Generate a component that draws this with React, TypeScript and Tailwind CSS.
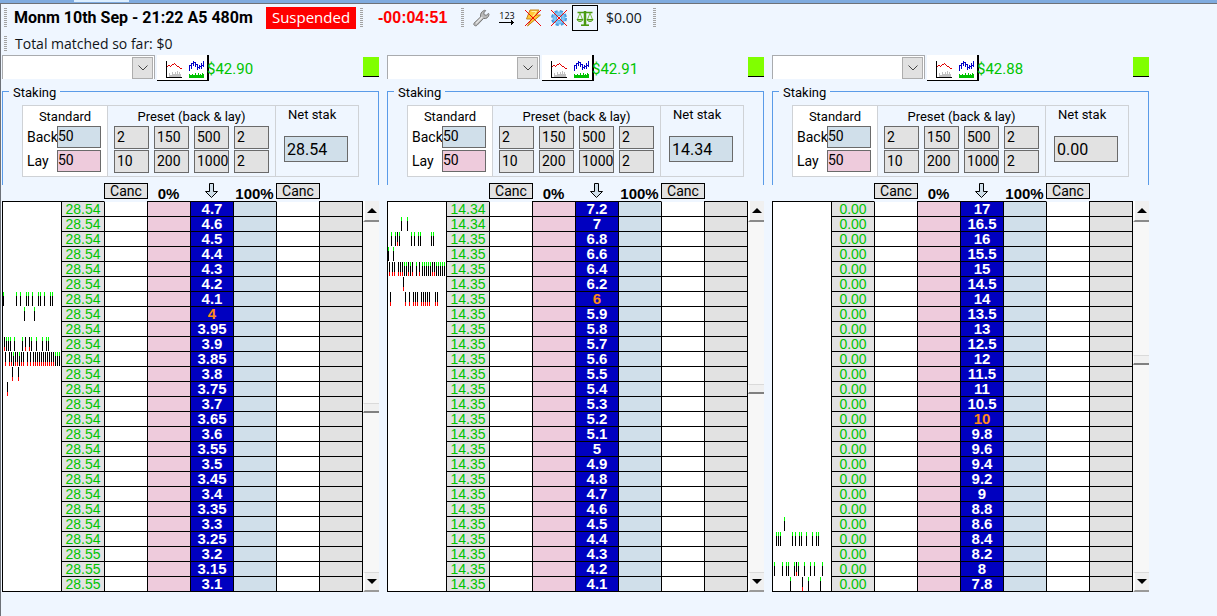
import { useState } from 'react';

interface Tick {
  x: number;
  down?: boolean;
}

interface Runner {
  name: string;
  balance: string;
  net: string;
  netFilled: boolean;
  stakes: string[];
  prices: string[];
  highlight: string;
  ticks: Record<number, Tick[]>;
  thumb: string;
}

const up = (...xs: number[]): Tick[] => xs.map((x) => ({ x }));
const down = (...xs: number[]): Tick[] => xs.map((x) => ({ x, down: true }));
const repeat = (value: string, count: number): string[] =>
  Array(count).fill(value);

const runners: Runner[] = [
  {
    name: 'Runner 1',
    balance: '$42.90',
    net: '28.54',
    netFilled: true,
    stakes: [...repeat('28.54', 23), ...repeat('28.55', 3)],
    prices:
      '4.7 4.6 4.5 4.4 4.3 4.2 4.1 4 3.95 3.9 3.85 3.8 3.75 3.7 3.65 3.6 3.55 3.5 3.45 3.4 3.35 3.3 3.25 3.2 3.15 3.1'.split(' '),
    highlight: '4',
    ticks: {
      6: up(0, 13, 17, 23, 25, 29, 35, 37, 41, 47, 49),
      7: up(21, 31),
      9: [...up(3, 5, 7, 11, 19, 28, 33, 39, 43, 45), ...down(1, 22, 26)],
      10: [
        ...up(10, 16, 52, 54, 56),
        ...down(2, 6, 8, 12, 14, 18, 20, 24, 27, 30, 32, 34, 36, 38, 40, 42, 44, 46, 48, 50),
      ],
      11: down(9, 15),
      12: down(4),
    },
    thumb: 'mt-[181px]',
  },
  {
    name: 'Runner 2',
    balance: '$42.91',
    net: '14.34',
    netFilled: true,
    stakes: [...repeat('14.34', 2), ...repeat('14.35', 24)],
    prices:
      '7.2 7 6.8 6.6 6.4 6.2 6 5.9 5.8 5.7 5.6 5.5 5.4 5.3 5.2 5.1 5 4.9 4.8 4.7 4.6 4.5 4.4 4.3 4.2 4.1'.split(' '),
    highlight: '6',
    ticks: {
      1: up(13, 19),
      2: [...up(3, 7, 11, 23, 26, 30, 32, 43, 45), ...down(9)],
      3: up(0, 5),
      4: [
        ...up(16, 18, 22, 28, 34, 36, 38, 40, 42, 48, 50, 52, 54, 56),
        ...down(1, 4, 6, 10, 12, 14, 20, 24, 31, 44, 46),
      ],
      5: down(15),
      6: down(2, 17, 21, 25, 27, 29, 33, 35, 37, 39, 41, 47, 49),
    },
    thumb: 'mt-[162px]',
  },
  {
    name: 'Runner 3',
    balance: '$42.88',
    net: '0.00',
    netFilled: false,
    stakes: repeat('0.00', 26),
    prices:
      '17 16.5 16 15.5 15 14.5 14 13.5 13 12.5 12 11.5 11 10.5 10 9.8 9.6 9.4 9.2 9 8.8 8.6 8.4 8.2 8 7.8'.split(' '),
    highlight: '10',
    ticks: {
      21: up(11),
      22: up(3, 5, 7, 19, 22, 26, 28, 33, 39, 43, 45),
      24: [...up(1, 9, 13, 15, 21, 25, 31, 37, 41, 49), ...down(23)],
      25: [...up(17, 35, 47), ...down(29)],
    },
    thumb: 'mt-[133px]',
  },
];

const presets = [
  ['2', '150', '500', '2'],
  ['10', '200', '1000', '2'],
];

function Grip({ tall }: { tall?: boolean }) {
  return (
    <span
      className={`w-[3px] shrink-0 bg-[repeating-linear-gradient(#a3a3a3_0_1px,transparent_1px_2px)] ${
        tall ? 'h-5' : 'h-4'
      }`}
    />
  );
}

function WrenchIcon() {
  return (
    <svg width="18" height="18" viewBox="0 0 18 18">
      <path
        d="M2 14.2 8.6 7.9C8 5.2 9.4 2.2 12.6 1.3l1.1.2-1.9 2.4.4 1.9 2 .5 2.4-1.9.4 1c-.2 2.9-2.7 4.7-5.5 4.1L5 16.3c-1.7 1.4-4-.4-3-2.1z"
        fill="#b9b9b9"
        stroke="#777"
      />
      <path d="M4 14.3 10.3 8" stroke="#ededed" strokeWidth="1.2" />
    </svg>
  );
}

function CountIcon() {
  return (
    <span className="flex w-[18px] flex-col items-center">
      <span className="font-['Open_Sans',sans-serif] text-[9px] leading-[9px] text-black">
        123
      </span>
      <svg width="16" height="5" viewBox="0 0 16 5" shapeRendering="crispEdges">
        <path d="M0 2h15v1H0zM12 0h1v5h-1zM13 1h1v3h-1z" fill="#000" />
      </svg>
    </span>
  );
}

function BoltIcon() {
  return (
    <svg width="18" height="18" viewBox="0 0 18 18">
      <path
        d="M6 1h9l-3 5h4.5L3.5 17 7.5 10H2.5z"
        fill="#ffc936"
        stroke="#c88418"
      />
      <path d="M7.5 2.5h5L9 7" stroke="#fff0a8" fill="none" />
      <path d="M1 1l16 16M17 1 1 17" stroke="#f00808" />
    </svg>
  );
}

function GearIcon() {
  return (
    <svg width="18" height="18" viewBox="0 0 18 18">
      <circle
        cx="9"
        cy="9"
        r="6.5"
        fill="none"
        stroke="#459ce0"
        strokeWidth="3"
        strokeDasharray="3 2.1"
      />
      <circle cx="9" cy="9" r="6" fill="#80c6f7" stroke="#69b4ee" />
      <circle cx="9" cy="9" r="2.5" fill="#eff6ff" stroke="#459ce0" />
      <path d="M1 1l16 16M17 1 1 17" stroke="#f00808" />
    </svg>
  );
}

function ScalesIcon() {
  return (
    <svg width="18" height="18" viewBox="0 0 18 18" fill="none" stroke="#4a9a12">
      <path d="M1.5 3.5h15" strokeWidth="1.5" />
      <path d="M9 2v14" strokeWidth="2.5" />
      <path d="M5 16.2h8" strokeWidth="1.6" />
      <path d="M4 4 1.5 10.5M4 4l2.5 6.5M14 4l-2.5 6.5M14 4l2.5 6.5" stroke="#7bc043" />
      <path d="M1 10.5h6c-.5 2.5-5.5 2.5-6 0zM11 10.5h6c-.5 2.5-5.5 2.5-6 0z" fill="#b7e38c" />
    </svg>
  );
}

function LineChartIcon() {
  return (
    <svg width="16" height="17" viewBox="0 0 16 17" shapeRendering="crispEdges">
      <path
        d="M3 16v-4h1v2h2v-3h1v2h2v-2h1v2h1v-3h1v3h1v-2h1v2h1v3z"
        fill="#c0c0c0"
      />
      <path d="M0 0h1v16h15v1H0z" fill="#000" />
      <path
        d="M1 5h1v1H1zM2 4h2v1H2zM4 5h1v1H4zM5 4h1v1H5zM6 3h2v1H6zM8 2h1v1H8zM9 3h1v1H9zM10 4h1v1h-1zM11 5h2v1h-2zM13 6h1v1h-1zM14 7h2v1h-2z"
        fill="#e00000"
      />
    </svg>
  );
}

function BarChartIcon() {
  return (
    <svg width="16" height="17" viewBox="0 0 16 17" shapeRendering="crispEdges">
      <path
        d="M0 4h1v6H0zM2 2h1v6H2zM4 0h1v5H4zM6 1h1v5H6zM8 3h1v6H8zM10 4h1v4h-1zM12 2h1v6h-1zM14 0h1v6h-1zM1 4h1v1H1zM3 2h1v1H3zM5 1h1v1H5zM7 3h1v1H7zM9 6h1v1H9zM11 5h1v1h-1zM13 4h1v1h-1z"
        fill="#0000c8"
      />
      <path
        d="M0 17v-4h1v1h2v-1h1v1h2v-2h1v2h2v-2h1v2h1v-1h1v1h1v-2h1v1h1v4z"
        fill="#00c000"
      />
    </svg>
  );
}

function Toolbar() {
  return (
    <header>
      <div className="flex h-[30px] items-center border-t border-[#6d7178] pb-0.5 pl-[3px]">
        <Grip tall />
        <h1 className="ml-[7px] w-[252px] whitespace-nowrap font-['Roboto',sans-serif] text-base font-bold text-black">
          Monm 10th Sep - 21:22 A5 480m
        </h1>
        <div className="flex h-[22px] w-[90px] items-center justify-center bg-[#ff0000] text-[15px] text-white">
          Suspended
        </div>
        <div className="ml-1 flex items-center">
          <Grip tall />
          <span className="ml-[15px] w-[70px] font-['Liberation_Sans',sans-serif] text-base font-bold text-[#ff0000]">
            -00:04:51
          </span>
          <span className="ml-[13px] flex">
            <Grip tall />
          </span>
        </div>
        <div className="ml-2 flex items-center gap-2">
          <button type="button" aria-label="Settings"><WrenchIcon /></button>
          <button type="button" aria-label="Count"><CountIcon /></button>
          <button type="button" aria-label="Quick bets"><BoltIcon /></button>
          <button type="button" aria-label="Automation"><GearIcon /></button>
        </div>
        <button
          type="button"
          aria-label="Balance"
          className="ml-1 flex size-[26px] items-center justify-center border border-black"
        >
          <ScalesIcon />
        </button>
        <span className="ml-2 w-[47px] text-sm">$0.00</span>
        <Grip tall />
      </div>
      <div className="flex h-[22px] items-center pl-[3px]">
        <Grip />
        <span className="ml-2 text-sm">Total matched so far: $0</span>
      </div>
    </header>
  );
}

function Staking({ runner }: { runner: Runner }) {
  return (
    <fieldset className="h-[104px] min-w-0 border-x border-t border-[#5a9be8] px-[19px]">
      <legend className="-ml-[13px] px-1 pt-1 text-[13px] leading-4">Staking</legend>
      <div className="mt-1 flex h-[72px] border border-[#cfd2d6]">
        <div className="w-[84px] shrink-0 bg-white pl-1">
          <h2 className="pr-1 pt-0.5 text-center text-[13px] leading-[17px]">Standard</h2>
          <label className="flex h-6 items-center">
            <span className="w-[30px]">Back</span>
            <input
              defaultValue="50"
              className="h-[22px] w-11 border border-[#6a6a6a] bg-[#d0dfea] pb-0.5"
            />
          </label>
          <label className="flex h-6 items-center">
            <span className="w-[30px]">Lay</span>
            <input
              defaultValue="50"
              className="h-[22px] w-11 border border-[#6a6a6a] bg-[#eecbdc] pb-0.5"
            />
          </label>
        </div>
        <div className="w-[169px] shrink-0 border-x border-[#cfd2d6] px-1.5">
          <h2 className="pt-0.5 text-center text-[13px] leading-[17px]">Preset (back &amp; lay)</h2>
          {presets.map((row, i) => (
            <div key={i} className="flex h-6 items-center gap-[5px]">
              {row.map((value, j) => (
                <input
                  key={j}
                  aria-label={`Preset ${i * 4 + j + 1}`}
                  defaultValue={value}
                  className="h-[23px] w-[35px] border border-[#6a6a6a] bg-[#e2e2e2] pl-0.5"
                />
              ))}
            </div>
          ))}
        </div>
        <label className="flex-1 pl-2">
          <span className="block pl-1 text-[13px] leading-[18px]">Net stak</span>
          <input
            defaultValue={runner.net}
            className={`mt-3 h-[26px] w-16 border border-[#6a6a6a] pl-0.5 text-base ${
              runner.netFilled ? 'bg-[#d0dfea]' : 'bg-[#e2e2e2]'
            }`}
          />
        </label>
      </div>
    </fieldset>
  );
}

function TickRow({ ticks }: { ticks: Tick[] }) {
  return (
    <svg width="58" height="14" className="block" shapeRendering="crispEdges">
      {ticks.map(({ x, down }) => (
        <g key={x}>
          <rect x={x} width="1" height="14" fill="#000" />
          <rect
            x={x}
            y={down ? 10 : 0}
            width="1"
            height="4"
            fill={down ? '#ff0000' : '#00ff00'}
          />
        </g>
      ))}
    </svg>
  );
}

function CancelButton() {
  return (
    <button
      type="button"
      className="flex h-4 w-11 items-center justify-center border border-black bg-[#e2e2e2] text-[14px] font-normal"
    >
      Canc
    </button>
  );
}

function Ladder({ runner }: { runner: Runner }) {
  const last = runner.prices.length - 1;

  return (
    <table className="w-full table-fixed border-separate border-spacing-0 text-center font-['Liberation_Sans',sans-serif]">
      <colgroup>
        <col className="w-[59px]" />
        <col span={6} />
        <col className="w-11" />
      </colgroup>
      <thead>
        <tr className="h-[18px] text-[15px] leading-[15px]">
          <th className="p-0" />
          <th className="p-0" />
          <th className="p-0 align-top font-['Roboto',sans-serif]"><CancelButton /></th>
          <th className="p-0 align-bottom">0%</th>
          <th className="p-0 align-top">
            <svg width="15" height="16" viewBox="0 0 15 16" className="mx-auto block">
              <path
                d="M5.5.5h4v8h4L7.5 14.5 1.5 8.500h4z"
                fill="#d0dfea"
                stroke="#000"
              />
            </svg>
          </th>
          <th className="p-0 align-bottom">100%</th>
          <th className="p-0 align-top font-['Roboto',sans-serif]"><CancelButton /></th>
          <th className="p-0" />
        </tr>
      </thead>
      <tbody className="text-base leading-[14px] [&_td]:border-l [&_td]:border-black [&_td]:p-0">
        {runner.prices.map((price, i) => {
          const bottom = i === last ? 'border-b' : '';
          const open = i === 0 ? 'border-t border-t-[#eff6ff]!' : 'border-t';
          return (
            <tr key={price} className={i === last ? 'h-4' : 'h-[15px]'}>
              <td className={`bg-white ${bottom} ${i === 0 ? 'border-t' : 'pt-px!'}`}>
                <TickRow ticks={runner.ticks[i] ?? []} />
              </td>
              <td className={`border-t bg-[#e2e2e2] text-[14px] leading-[14px] text-[#00c400] ${bottom}`}>
                {runner.stakes[i]}
              </td>
              <td className={`bg-white ${open} ${bottom}`} />
              <td className={`border-t bg-[#eecbdc] ${bottom}`} />
              <td
                className={`border-t bg-[#0000c0] text-[15px] leading-[14px] font-bold ${bottom} ${
                  price === runner.highlight ? 'text-[#ff8c18]' : 'text-white'
                }`}
              >
                {price}
              </td>
              <td className={`border-t bg-[#d0dfea] ${bottom}`} />
              <td className={`bg-white ${open} ${bottom}`} />
              <td className={`border-t border-r bg-[#e2e2e2] ${bottom}`} />
            </tr>
          );
        })}
      </tbody>
    </table>
  );
}

function Scrollbar({ thumb }: { thumb: string }) {
  return (
    <div className="mt-[18px] flex w-4 shrink-0 flex-col bg-[#f7f7f7]">
      <button
        type="button"
        aria-label="Scroll up"
        className="flex h-[21px] items-center justify-center border-b-2 border-l-2 border-b-[#8a8a8a] border-l-white bg-[#f0f0f0]"
      >
        <svg width="10" height="5" viewBox="0 0 10 5">
          <path d="M5 0 10 5H0z" />
        </svg>
      </button>
      <div className={`h-2.5 border-b-2 border-l border-t border-t-[#dadada] border-b-[#808080] border-l-white bg-[#f0f0f0] ${thumb}`} />
      <button
        type="button"
        aria-label="Scroll down"
        className="mt-auto flex h-5 items-center justify-center border-t border-b-2 border-l-2 border-t-[#dadada] border-b-[#9a9a9a] border-l-white bg-[#f0f0f0]"
      >
        <svg width="10" height="5" viewBox="0 0 10 5">
          <path d="M0 0h10L5 5z" />
        </svg>
      </button>
    </div>
  );
}

function RunnerPanel({ runner }: { runner: Runner }) {
  const [selected, setSelected] = useState<string>('');

  return (
    <section className="min-w-0">
      <div className="flex h-[26px] items-start">
        <div className="relative h-6 w-[153px] border-x border-t border-[#a9abae] bg-white">
          <select
            aria-label={runner.name}
            className="size-full appearance-none px-2"
            onChange={(event) => setSelected(event.target.value)}
            value={selected}
          >
            <option value="" />
          </select>
          <span className="pointer-events-none absolute right-px top-px flex h-[22px] w-[21px] items-center justify-center border border-[#adadad] bg-[#e1e1e1]">
            <svg width="10" height="6" viewBox="0 0 10 6" fill="none" stroke="#444">
              <path d="M.5.5 5 5 9.5.5" />
            </svg>
          </span>
        </div>
        <div className="ml-0.5 flex h-[26px] w-[52px] items-center gap-[7px] border-b border-r-2 border-black bg-white pt-1 pl-[9px]">
          <button type="button" aria-label="Price chart"><LineChartIcon /></button>
          <button type="button" aria-label="Volume chart"><BarChartIcon /></button>
        </div>
        <span className="mt-1 -ml-0.5 font-['Roboto',sans-serif] text-[15px] leading-[21px] text-[#00c400]">
          {runner.balance}
        </span>
        <button
          type="button"
          aria-label="Active"
          className="mt-0.5 ml-auto h-5 w-4 border-b border-black bg-[#80ff00]"
        />
      </div>
      <Staking runner={runner} />
      <div className="-mt-0.5 flex">
        <div className="min-w-0 flex-1">
          <Ladder runner={runner} />
        </div>
        <Scrollbar thumb={runner.thumb} />
      </div>
    </section>
  );
}

function App() {
  return (
    <div className="flex min-h-screen flex-col bg-[#eff6ff] font-['Open_Sans','Noto_Sans',sans-serif] text-[#101418]">
      <div className="h-[3px] bg-[#7fabdf] pl-[74px]">
        <div className="h-0.5 w-[55px] bg-[#dceeff]" />
      </div>
      <div className="flex-1 border-l border-[#6d7178]">
        <Toolbar />
        <main className="grid grid-cols-3 gap-2 pr-[68px] pl-px font-['Roboto',sans-serif] text-[14px] text-black">
          {runners.map((runner) => (
            <RunnerPanel key={runner.name} runner={runner} />
          ))}
        </main>
      </div>
    </div>
  );
}

export default App;
